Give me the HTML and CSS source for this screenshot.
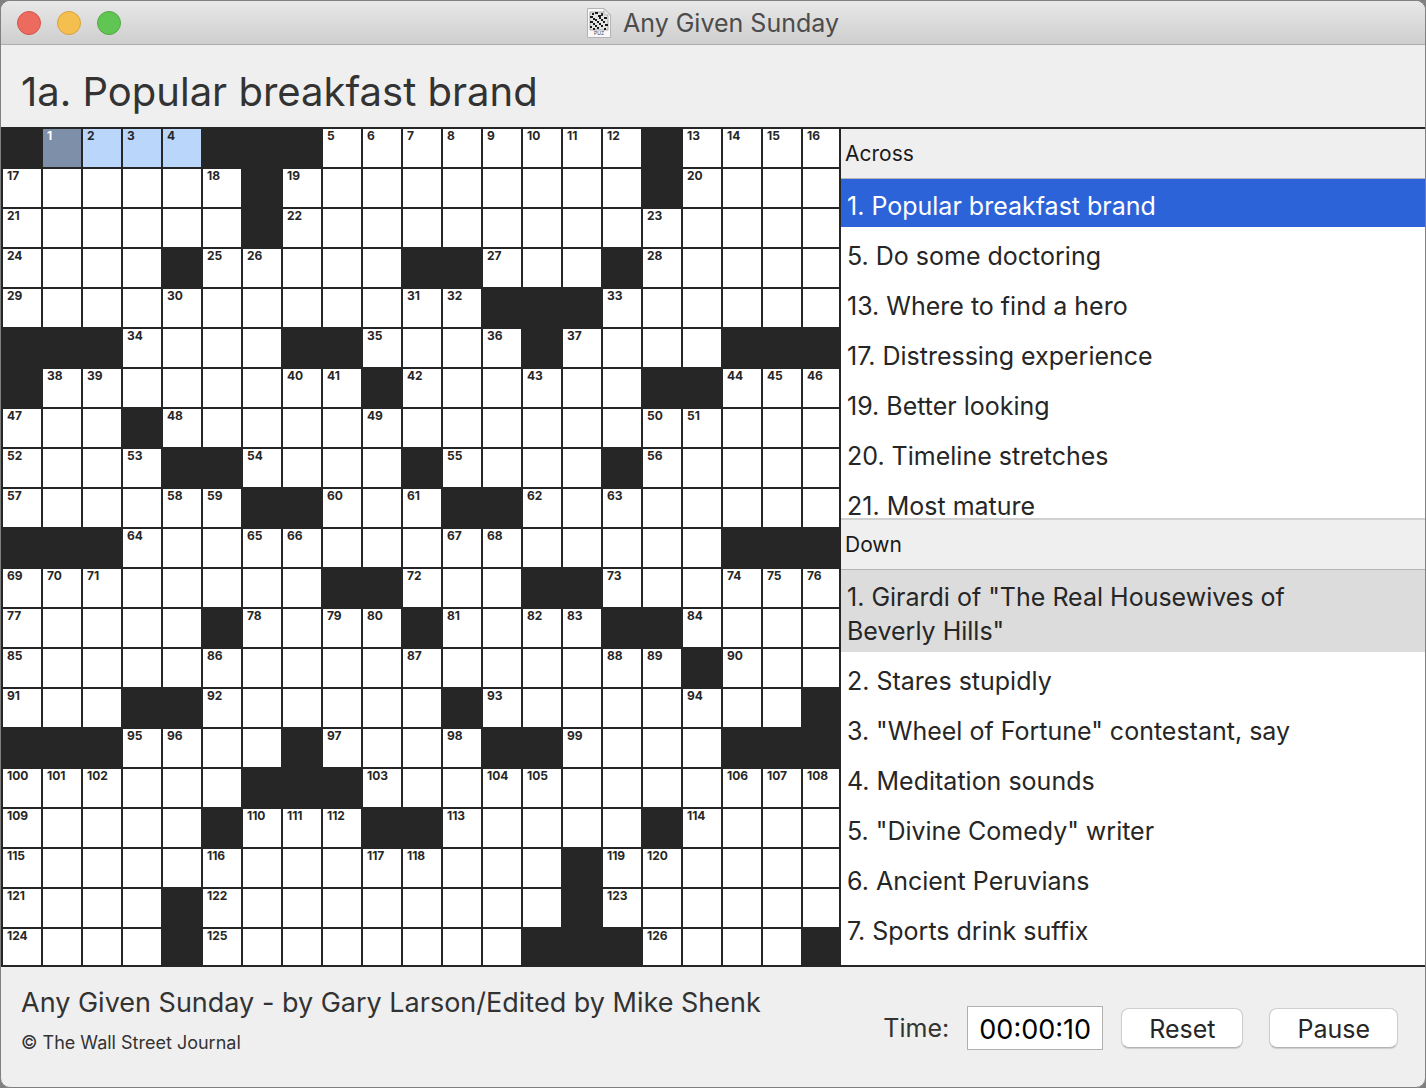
FILE: index.html
```html
<!DOCTYPE html>
<html lang="en">
<head>
    <meta charset="utf-8">
    <title>Any Given Sunday</title>
    <link rel="stylesheet" href="styles.css">
</head>
<body>
    <div class="window">
        <header class="titlebar">
            <div class="lights">
                <button type="button" class="light close" aria-label="Close"></button>
                <button type="button" class="light minimize" aria-label="Minimize"></button>
                <button type="button" class="light zoom" aria-label="Zoom"></button>
            </div>
            <div class="title">
                <svg class="doc-icon" width="24" height="30" viewBox="0 0 24 30" aria-hidden="true">
                    <path d="M0.5 0.5H17L23.5 7V29.5H0.5Z" fill="#f8f8f8" stroke="#b4b4b4"/>
                    <path d="M3 4H17L21 8V22H3Z" fill="#e4e4e4" stroke="#8c8c8c" stroke-width="0.7"/>
                    <path d="M17 0.5V7H23.5Z" fill="#e6e6e6" stroke="#b0b0b0" stroke-width="0.7"/>
                    <path d="M3 9h3M8 5h3M15 5v3M11 8h3M6 11h2M8 12h2M10 14h2M12 16h2M14 18h2M12 10h2M14 12h2M16 14h2M17 10h3M3 14h3M6 16h2M8 18h2M3 19h2M10 20h2M18 17h3M17 21h2M6 21h2M5 6h2" fill="none" stroke="#1c1c1c" stroke-width="1.8"/>
                    <text x="12" y="27" class="doc-type">PUZ</text>
                </svg>
                <span>Any Given Sunday</span>
            </div>
        </header>

        <h1 class="current-clue">1a. Popular breakfast brand</h1>

        <main class="puzzle">
            <div class="board" id="board"></div>
            <div class="clues">
                <section class="pane across">
                    <h2>Across</h2>
                    <ul>
                        <li class="active">1. Popular breakfast brand</li>
                        <li>5. Do some doctoring</li>
                        <li>13. Where to find a hero</li>
                        <li>17. Distressing experience</li>
                        <li>19. Better looking</li>
                        <li>20. Timeline stretches</li>
                        <li>21. Most mature</li>
                    </ul>
                </section>
                <section class="pane down">
                    <h2>Down</h2>
                    <ul>
                        <li class="crossing">1. Girardi of "The Real Housewives of Beverly Hills"</li>
                        <li>2. Stares stupidly</li>
                        <li>3. "Wheel of Fortune" contestant, say</li>
                        <li>4. Meditation sounds</li>
                        <li>5. "Divine Comedy" writer</li>
                        <li>6. Ancient Peruvians</li>
                        <li>7. Sports drink suffix</li>
                    </ul>
                </section>
            </div>
        </main>

        <footer class="statusbar">
            <div class="credits">
                <p class="byline">Any Given Sunday - by Gary Larson/Edited by Mike Shenk</p>
                <p class="copyright">© The Wall Street Journal</p>
            </div>
            <form class="timer">
                <label for="time">Time:</label>
                <input type="text" id="time" value="00:00:10" readonly>
                <div class="buttons">
                    <button type="button">Reset</button>
                    <button type="button">Pause</button>
                </div>
            </form>
        </footer>
    </div>
    <script src="board.js"></script>
</body>
</html>
```
FILE: styles.css
```css
* {
    box-sizing: border-box;
}

body {
    margin: 0;
    background-color: #808080;
    color: #262626;
    font-family: Inter, "Liberation Sans", sans-serif;
    font-size: 25px;
}

h1,
h2,
p,
ul {
    margin: 0;
    padding: 0;
    font-weight: normal;
}

.window {
    display: flex;
    flex-direction: column;
    height: 100vh;
    border: 1px solid #808080;
    border-radius: 10px;
    overflow: hidden;
    background-color: #efefef;
}

/* title bar */
.titlebar {
    display: grid;
    grid-template-columns: 1fr auto 1fr;
    align-items: center;
    height: 44px;
    padding: 0 16px;
    border-bottom: 1px solid #acacac;
    background: linear-gradient(#e8e8e8, #cecece);
    color: #4c4c4c;
}

.lights {
    display: flex;
    gap: 16px;
}

.light {
    width: 24px;
    height: 24px;
    padding: 0;
    border: 1px solid;
    border-radius: 50%;
}

.close {
    background-color: #ed6a5e;
    border-color: #d35548;
}

.minimize {
    background-color: #f5bf4f;
    border-color: #d9a13a;
}

.zoom {
    background-color: #61c554;
    border-color: #4eaa40;
}

.title {
    display: flex;
    align-items: center;
    gap: 12px;
}

.doc-type {
    font-size: 5px;
    text-anchor: middle;
    fill: #444;
}

.current-clue {
    height: 82px;
    padding: 22px 20px 0;
    font-size: 40px;
    line-height: 50px;
    color: #333;
}

/* grid and clue lists */
.puzzle {
    display: flex;
    flex: 1;
    min-height: 0;
    border-top: 2px solid #262626;
    border-bottom: 2px solid #262626;
    background-color: #fff;
}

.board {
    display: grid;
    grid-template-columns: repeat(20, 38px) 36px;
    grid-template-rows: repeat(20, 38px) 36px;
    gap: 2px;
    border-left: 2px solid #262626;
    border-right: 2px solid #262626;
    background-color: #262626;
}

.cell {
    padding-left: 4px;
    background-color: #fff;
    font-size: 12px;
    font-weight: 700;
    line-height: 14px;
}

.block {
    background-color: #262626;
}

.word {
    background-color: #bad6fb;
}

.cursor {
    background-color: #7d8fa9;
    color: #fff;
}

.clues {
    display: grid;
    grid-template-rows: 389px 1fr;
    flex: 1;
    min-width: 0;
}

.pane {
    display: flex;
    flex-direction: column;
    min-height: 0;
}

.down {
    border-top: 2px solid #d0d0d0;
}

.pane h2 {
    flex: none;
    height: 50px;
    padding-left: 4px;
    border-bottom: 1px solid #b4b4b4;
    background-color: #efefef;
    color: #1a1a1a;
    font-size: 21px;
    line-height: 49px;
}

.pane ul {
    display: flex;
    flex-direction: column;
    flex: 1;
    gap: 2px;
    min-height: 0;
    overflow: hidden;
    list-style: none;
}

.pane li {
    flex: none;
    padding: 10px 60px 4px 6px;
    line-height: 34px;
}

.pane .active {
    background-color: #2c63d9;
    color: #fff;
}

.pane .crossing {
    background-color: #dcdcdc;
}

/* footer */
.statusbar {
    display: flex;
    justify-content: space-between;
    height: 120px;
    padding: 18px 27px 0 20px;
    color: #333;
}

.byline {
    font-size: 27px;
    line-height: 36px;
}

.copyright {
    margin-top: 10px;
    font-size: 18px;
    line-height: 24px;
}

.timer {
    display: flex;
    align-items: center;
    align-self: flex-start;
    gap: 18px;
    margin-top: 21px;
}

.timer input {
    width: 136px;
    height: 44px;
    padding: 2px 0 0;
    border: 1px solid #b0b0b0;
    background-color: #fff;
    color: #000;
    font: inherit;
    font-size: 27px;
    text-align: center;
}

.buttons {
    display: flex;
    gap: 26px;
}

.buttons button {
    height: 40px;
    padding: 2px 27px 0;
    border: 1px solid #cfcfcf;
    border-bottom-color: #b4b4b4;
    border-radius: 8px;
    background-color: #fff;
    box-shadow: 0 1px 1px rgba(0, 0, 0, 0.15);
    color: #262626;
    font: inherit;
}
```
FILE: board.js
```js
// '#' is a block, '.' is an open cell
var rows = [
    '#....###........#....',
    '......#.........#....',
    '......#..............',
    '....#.....##...#.....',
    '............###......',
    '###....##....#....###',
    '#........#......##...',
    '...#.................',
    '....##....#....#.....',
    '......##...##........',
    '###...............###',
    '........##...##......',
    '.....#....#....##....',
    '.................#...',
    '...##......#........#',
    '###....#....##....###',
    '......###............',
    '.....#...##.....#....',
    '..............#......',
    '....#.........#......',
    '....#........###....#'
];

function isOpen(row, col) {
    return rows[row] !== undefined && rows[row][col] === '.';
}

var board = document.getElementById('board');
var number = 0;

for (var r = 0; r < rows.length; r++) {
    for (var c = 0; c < rows[r].length; c++) {
        var cell = document.createElement('div');
        cell.className = 'cell';
        if (!isOpen(r, c)) {
            cell.classList.add('block');
        } else {
            var startsAcross = !isOpen(r, c - 1) && isOpen(r, c + 1);
            var startsDown = !isOpen(r - 1, c) && isOpen(r + 1, c);
            if (startsAcross || startsDown) {
                number++;
                cell.textContent = number;
            }
        }
        // selected word is 1 across
        if (r === 0 && c >= 1 && c <= 4) {
            cell.classList.add(c === 1 ? 'cursor' : 'word');
        }
        board.appendChild(cell);
    }
}
```
